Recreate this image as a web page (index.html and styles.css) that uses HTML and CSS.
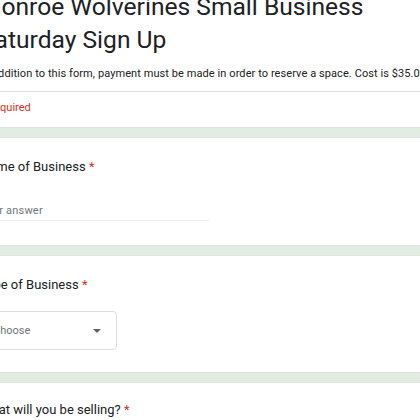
FILE: index.html
```html
<!DOCTYPE html>
<html>
<head>
<meta charset="utf-8">
<link rel="stylesheet" href="styles.css">
</head>
<body>
<div class="form">
  <div class="card header">
    <div class="header-main">
      <h1 class="title">Monroe Wolverines Small Business Saturday Sign Up</h1>
      <p class="desc">In addition to this form, payment must be made in order to reserve a space. Cost is $35.00 per space.</p>
    </div>
    <div class="required-note"><span class="star">*</span> Required</div>
  </div>

  <div class="card q q1">
    <div class="label">Name of Business <span class="star">*</span></div>
    <div class="answer">Your answer</div>
  </div>

  <div class="card q q2">
    <div class="label">Type of Business <span class="star">*</span></div>
    <div class="select"><span class="choose">Choose</span><span class="arrow"></span></div>
  </div>

  <div class="card q q3">
    <div class="label">What will you be selling? <span class="star">*</span></div>
  </div>
</div>
</body>
</html>
```

FILE: styles.css
```css
html, body {
  margin: 0;
  padding: 0;
  height: 100%;
  overflow: hidden;
  background: #e3ece3;
}

.form {
  margin-left: -44px;
  width: 560px;
  display: flex;
  flex-direction: column;
  gap: 11px;
  font-family: Roboto, "Liberation Sans", sans-serif;
  color: #202124;
}

.card {
  background: #fff;
  box-shadow: 0 0 0 1px #dde3dd;
  padding-left: 24px;
}

.header-main {
  padding-right: 24px;
}

.title {
  margin: -10px 0 0 0;
  font-size: 24.6px;
  line-height: 33px;
  font-weight: 400;
  width: 400px;
}

.desc {
  margin: 10px 0 0 0;
  font-size: 11px;
  line-height: 16px;
  letter-spacing: 0.08px;
  white-space: nowrap;
  padding-bottom: 9px;
}

.required-note {
  margin-left: -24px;
  padding-left: 24px;
  border-top: 1px solid #dadce0;
  padding-top: 8px;
  padding-bottom: 11px;
  font-size: 11px;
  line-height: 16px;
  color: #d93025;
}

.star {
  color: #d93025;
}

.q {
  padding-top: 20px;
}

.label {
  font-size: 13px;
  line-height: 18px;
}

.q1 {
  padding-bottom: 24px;
}

.answer {
  margin-top: 27px;
  width: 229px;
  font-size: 11px;
  line-height: 16px;
  letter-spacing: 0.2px;
  color: #70757a;
  padding-bottom: 1px;
  border-bottom: 1px solid #e8eaed;
}

.q2 {
  padding-bottom: 22px;
}

.select {
  margin-top: 17px;
  box-sizing: border-box;
  width: 137px;
  height: 39px;
  border: 1px solid #dadce0;
  border-radius: 4px;
  display: flex;
  align-items: center;
  justify-content: space-between;
  padding: 0 15px 0 12px;
  font-size: 11px;
  color: #70757a;
}

.arrow {
  width: 0;
  height: 0;
  border-left: 4px solid transparent;
  border-right: 4px solid transparent;
  border-top: 4px solid #5f6368;
}

.q3 {
  padding-top: 18px;
  padding-bottom: 40px;
}
```
